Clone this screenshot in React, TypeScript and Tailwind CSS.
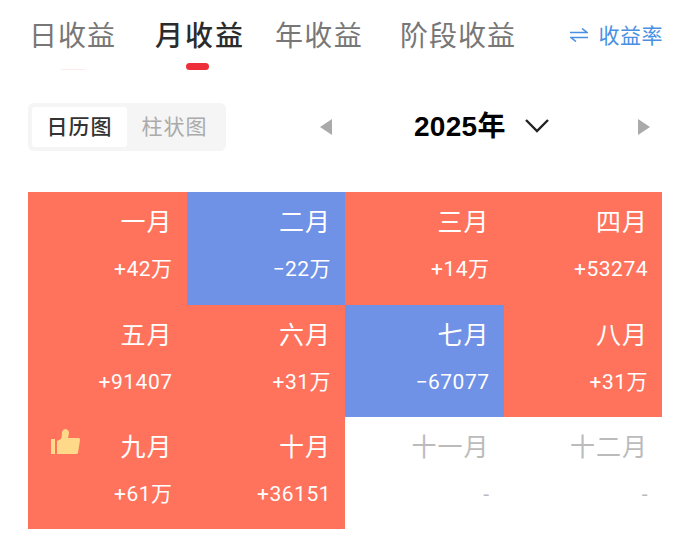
const cjk = "font-['Noto_Sans_CJK_SC','Inter',sans-serif]";

const months = [
	{ name: "一月", value: "+42万", tone: "red" },
	{ name: "二月", value: "−22万", tone: "blue" },
	{ name: "三月", value: "+14万", tone: "red" },
	{ name: "四月", value: "+53274", tone: "red" },
	{ name: "五月", value: "+91407", tone: "red" },
	{ name: "六月", value: "+31万", tone: "red" },
	{ name: "七月", value: "−67077", tone: "blue" },
	{ name: "八月", value: "+31万", tone: "red" },
	{ name: "九月", value: "+61万", tone: "red", best: true },
	{ name: "十月", value: "+36151", tone: "red" },
	{ name: "十一月", value: "-", tone: "none" },
	{ name: "十二月", value: "-", tone: "none" },
];

const ThumbUp = () => (
	<svg width="32" height="26" viewBox="0 0 32 26" className="absolute left-[21px] top-[12px]">
		<rect x="2" y="10" width="4" height="15" fill="#ffd98a" />
		<path
			d="M8 12 L12 10 Q13 8 13 3 Q14 0 17 0 Q20 1 20 4 L19 9 L30 9 Q31 9 31 11 L29 24 Q29 25 27 25 L8 25 Z"
			fill="#ffd98a"
		/>
	</svg>
);

export default function App() {
	return (
		<div className={`${cjk} flex h-[551px] w-[690px] flex-col overflow-hidden bg-white`}>
			<div className="flex h-[70px] items-start pl-[29px] pr-[27px] pt-[13px]">
				<div className="flex flex-col items-center">
					<span className="text-[28px] leading-[42px] tracking-[1px] text-[#777]">日收益</span>
					<div className="mt-[14px] h-px w-[24px] bg-[#fdeaea]" />
				</div>
				<div className="ml-[39px] flex flex-col items-center">
					<span className="text-[28px] leading-[42px] font-medium tracking-[2px] text-[#2b2b2b]">月收益</span>
					<div className="mr-[6px] mt-[8px] h-[7px] w-[23px] rounded-full bg-[#ee2e38]" />
				</div>
				<span className="ml-[30px] text-[28px] leading-[42px] tracking-[1.3px] text-[#777]">年收益</span>
				<span className="ml-[37px] text-[28px] leading-[42px] tracking-[1px] text-[#777]">阶段收益</span>
				<div className="ml-auto flex h-[44px] items-center gap-[11px] text-[#4a90e2]">
					<svg width="18" height="14" viewBox="0 0 18 14" fill="none" stroke="#4a90e2" strokeWidth="1.6">
						<path d="M0 4.5 H17 L12 0.5" />
						<path d="M18 9.5 H1 L6 13.5" />
					</svg>
					<span className="text-[21px] tracking-[0.5px]">收益率</span>
				</div>
			</div>

			<div className="mt-[33px] flex h-[48px] items-center pl-[28px] pr-[40px]">
				<div className="flex h-[48px] w-[198px] rounded-[6px] bg-[#f5f5f5] p-[4px]">
					<div className="flex h-[40px] w-[95px] items-center justify-center rounded-[3px] bg-white pb-[3px] text-[21px] font-medium tracking-[1px] text-[#333]">
						日历图
					</div>
					<div className="flex h-[40px] flex-1 items-center justify-center pb-[3px] text-[21px] tracking-[1px] text-[#aaa]">
						柱状图
					</div>
				</div>
				<div className="ml-[94px] h-0 w-0 border-y-[8px] border-r-[12px] border-y-transparent border-r-[#aaa]" />
				<span className="ml-[82px] font-['Liberation_Sans','Noto_Sans_CJK_SC',sans-serif] text-[28px] font-bold leading-none tracking-[0.3px] text-black">
					2025年
				</span>
				<svg width="26" height="16" viewBox="0 0 26 16" className="mb-[2px] ml-[18px]">
					<path d="M2 2 L13 13 L24 2" fill="none" stroke="#222" strokeWidth="2.4" />
				</svg>
				<div className="ml-auto h-0 w-0 border-y-[8px] border-l-[12px] border-y-transparent border-l-[#aaa]" />
			</div>

			<div className="ml-[28px] mt-[41px] grid h-[337px] w-[634px] grid-cols-4 grid-rows-[113px_112px_112px]">
				{months.map((m) => (
					<div
						key={m.name}
						className={`relative flex flex-col items-end pr-[14px] pt-[10px] ${
							m.tone === "red" ? "bg-[#ff735d] text-white" : m.tone === "blue" ? "bg-[#6f91e6] text-white" : "bg-white text-[#bbb]"
						}`}
					>
						{m.best && <ThumbUp />}
						<span className="text-[25px] leading-[36px] tracking-[1px]">{m.name}</span>
						<span className="mt-[16px] font-['Roboto','Noto_Sans_CJK_SC',sans-serif] text-[21px] leading-[30px] tracking-[0.5px]">
							{m.value}
						</span>
					</div>
				))}
			</div>
		</div>
	);
}
